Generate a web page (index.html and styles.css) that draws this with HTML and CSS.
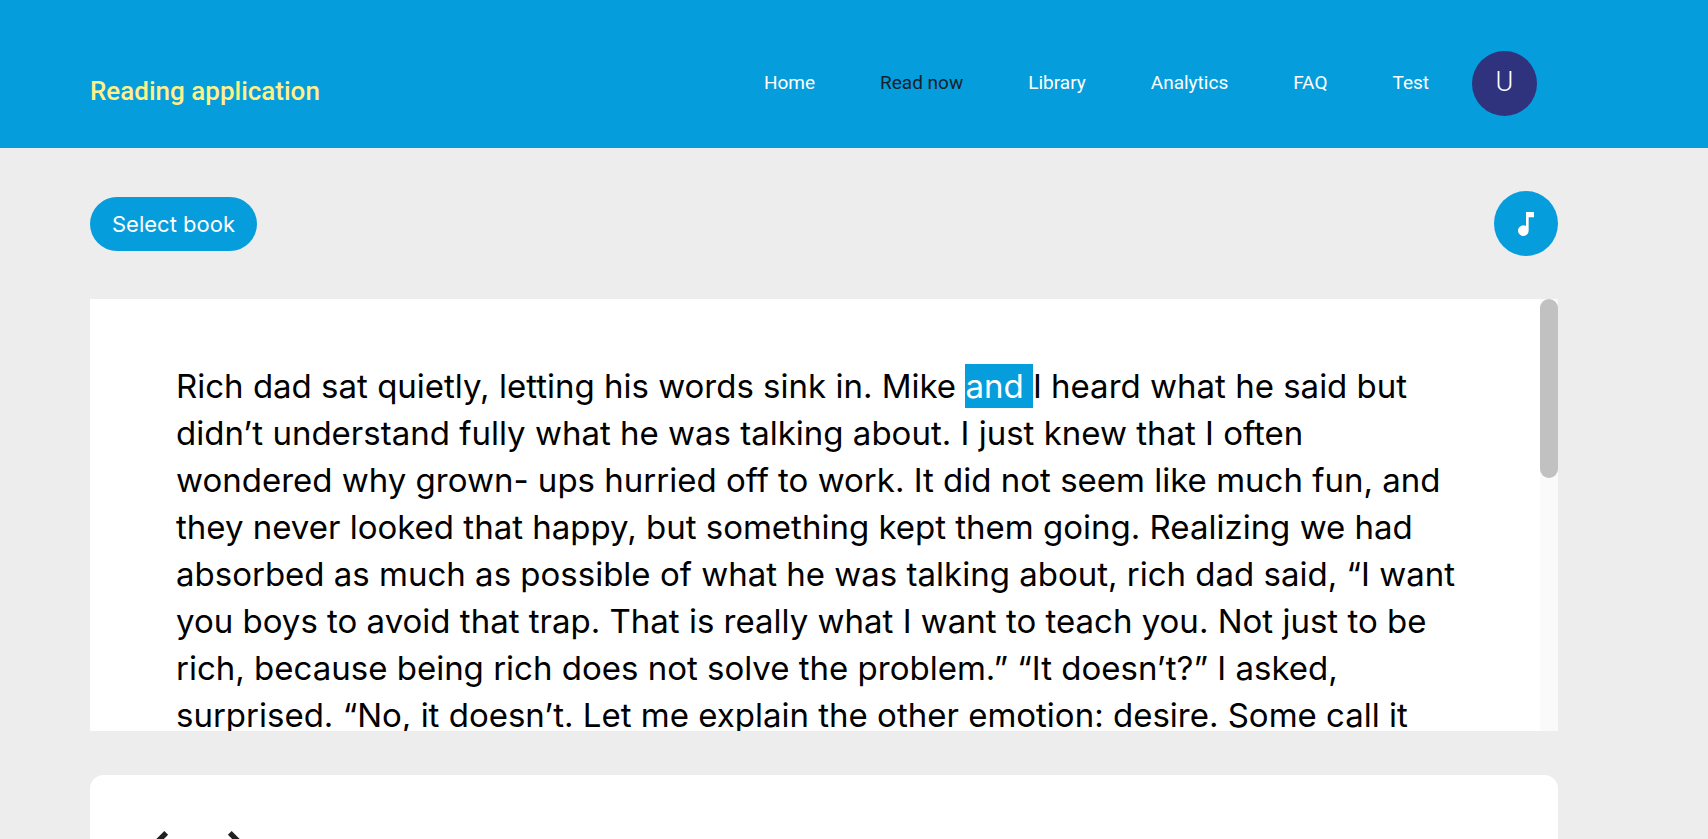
FILE: index.html
```html
<!DOCTYPE html>
<html lang="en">
<head>
<meta charset="utf-8">
<title>Reading application</title>
<link rel="stylesheet" href="styles.css">
</head>
<body>
<header class="header">
  <a class="brand" href="#">Reading application</a>
  <div class="header-right">
    <nav class="nav">
      <a href="#">Home</a>
      <a class="active" href="#" aria-current="page">Read now</a>
      <a href="#">Library</a>
      <a href="#">Analytics</a>
      <a href="#">FAQ</a>
      <a href="#">Test</a>
    </nav>
    <button class="avatar" type="button">U</button>
  </div>
</header>
<main class="main">
  <div class="toolbar">
    <button class="select-book" type="button">Select book</button>
    <button class="music" type="button" aria-label="Music">
      <svg viewBox="0 0 24 24" width="32" height="32" fill="currentColor"><path d="M12 3v10.55A4 4 0 1 0 14 17V7h4V3z"/></svg>
    </button>
  </div>
  <section class="reader">
    <div class="page" tabindex="0">
      <p class="text">Rich dad sat quietly, letting his words sink in. Mike <mark>and </mark>I heard what he said but<br>
      didn’t understand fully what he was talking about. I just knew that I often<br>
      wondered why grown- ups hurried off to work. It did not seem like much fun, and<br>
      they never looked that happy, but something kept them going. Realizing we had<br>
      absorbed as much as possible of what he was talking about, rich dad said, “I want<br>
      you boys to avoid that trap. That is really what I want to teach you. Not just to be<br>
      rich, because being rich does not solve the problem.” “It doesn’t?” I asked,<br>
      surprised. “No, it doesn’t. Let me explain the other emotion: desire. Some call it</p>
    </div>
    <div class="scrollbar" aria-hidden="true"><div class="thumb"></div></div>
  </section>
  <section class="controls">
    <button type="button" aria-label="Previous"><svg viewBox="0 0 24 24" width="64" height="64" fill="currentColor"><path d="M15.41 7.41 14 6l-6 6 6 6 1.41-1.41L10.83 12z"/></svg></button>
    <button type="button" aria-label="Next"><svg viewBox="0 0 24 24" width="64" height="64" fill="currentColor"><path d="M10 6 8.59 7.41 13.17 12l-4.58 4.59L10 18l6-6z"/></svg></button>
  </section>
</main>
</body>
</html>
```
FILE: styles.css
```css
* { box-sizing: border-box; }
body {
  margin: 0;
  height: 100vh;
  overflow-y: auto;
  scrollbar-width: none;
  background: #ededed;
  font-family: Inter, "Open Sans", sans-serif;
}
button { border: 0; padding: 0; font: inherit; color: inherit; background: none; cursor: pointer; }
.header {
  display: flex;
  justify-content: space-between;
  align-items: center;
  height: 148px;
  padding: 18px 171px 0 90px;
  background: #059ddb;
  color: #fff;
  font-family: Roboto, sans-serif;
}
.brand { padding-top: 16px; color: #fff08a; font-size: 26px; font-weight: 500; text-decoration: none; }
.header-right { display: flex; align-items: center; gap: 43px; }
.nav { display: flex; gap: 65px; padding-bottom: 2px; }
.nav a { color: #fff; font-size: 19px; text-decoration: none; }
.nav .active { color: #14212b; }
.avatar { width: 65px; height: 65px; padding-bottom: 2px; border-radius: 50%; background: #2f327d; color: #fff; font-size: 27px; font-weight: 300; }
.main { padding: 43px 150px 43px 90px; }
.toolbar { display: flex; justify-content: space-between; align-items: center; }
.select-book { height: 54px; padding: 0 22px; border-radius: 27px; background: #059ddb; color: #fff; font-size: 22px; }
.music { display: grid; place-items: center; width: 64px; height: 65px; border-radius: 50%; background: #059ddb; color: #fff; }
.reader { display: flex; height: 432px; margin-top: 43px; background: #fff; }
.page { flex: 1; min-width: 0; overflow-y: auto; scrollbar-width: none; }
.scrollbar { width: 18px; background: #fafafa; }
.thumb { height: 179px; border-radius: 9px; background: #c1c1c1; }
.text { margin: 0; padding: 64px 0 64px 86px; font-size: 33px; line-height: 47px; color: #000; white-space: nowrap; }
.text mark { padding: 2px 0; background: #059ddb; color: #fff; }
.controls { display: flex; gap: 14px; margin-top: 44px; padding: 40px 37px; border-radius: 14px; background: #fff; color: #212121; }
```
